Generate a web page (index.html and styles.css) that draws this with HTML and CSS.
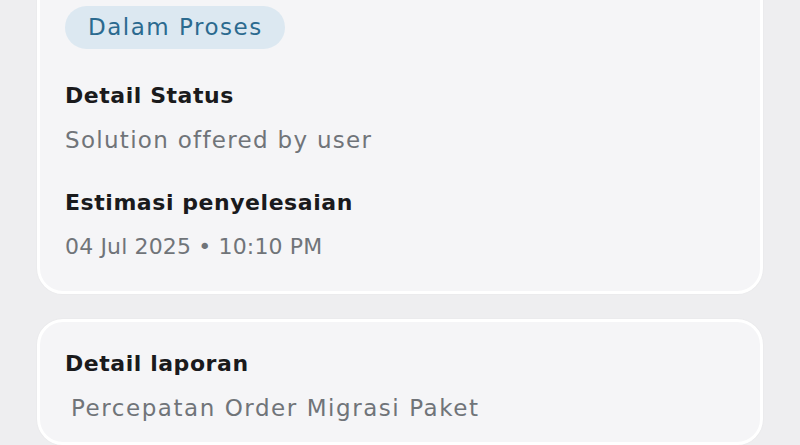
FILE: index.html
```html
<!DOCTYPE html>
<html>
<head>
<meta charset="utf-8">
<link rel="stylesheet" href="styles.css">
</head>
<body>
<div class="page">
  <section class="card card-status">
    <span class="badge">Dalam Proses</span>
    <div class="fields">
      <div class="field">
        <div class="label">Detail Status</div>
        <div class="value">Solution offered by user</div>
      </div>
      <div class="field">
        <div class="label">Estimasi penyelesaian</div>
        <div class="value date">04 Jul 2025 • 10:10 PM</div>
      </div>
    </div>
  </section>
  <section class="card card-report">
    <div class="field">
      <div class="label">Detail laporan</div>
      <div class="value indent">Percepatan Order Migrasi Paket</div>
    </div>
  </section>
</div>
</body>
</html>
```
FILE: styles.css
```css
html, body {
  margin: 0;
  padding: 0;
  background: #eeeef0;
  overflow: hidden;
}
.page {
  width: 800px;
  height: 445px;
  padding: 0 37px;
  box-sizing: border-box;
  display: flex;
  flex-direction: column;
  gap: 25px;
  font-family: "DejaVu Sans", "Liberation Sans", sans-serif;
}
.card {
  background: #f5f5f7;
  border: 3px solid #ffffff;
  border-radius: 26px;
  padding: 0 25px;
  box-shadow: 0 0 2px rgba(0,0,0,0.05);
}
.card-status {
  margin-top: -30px;
  padding-top: 33px;
  padding-bottom: 29px;
  display: flex;
  flex-direction: column;
  align-items: flex-start;
  gap: 32px;
}
.fields {
  display: flex;
  flex-direction: column;
  gap: 33px;
}
.card-report {
  padding-top: 27px;
  height: 200px;
}
.badge {
  display: inline-block;
  background: #dce8f1;
  color: #2b6a8f;
  font-size: 23px;
  letter-spacing: 1.5px;
  line-height: 43px;
  height: 43px;
  padding: 0 22px 0 23px;
  border-radius: 22px;
}
.field {
  display: flex;
  flex-direction: column;
  gap: 14px;
}
.label {
  font-size: 22px;
  font-weight: 700;
  letter-spacing: 0.55px;
  color: #1a1a1c;
  line-height: 30px;
}
.value {
  font-size: 23px;
  letter-spacing: 1.3px;
  color: #707479;
  line-height: 30px;
}
.value.date {
  font-size: 22px;
  letter-spacing: 0.15px;
}
.value.indent {
  padding-left: 6px;
  letter-spacing: 1.55px;
}
```
